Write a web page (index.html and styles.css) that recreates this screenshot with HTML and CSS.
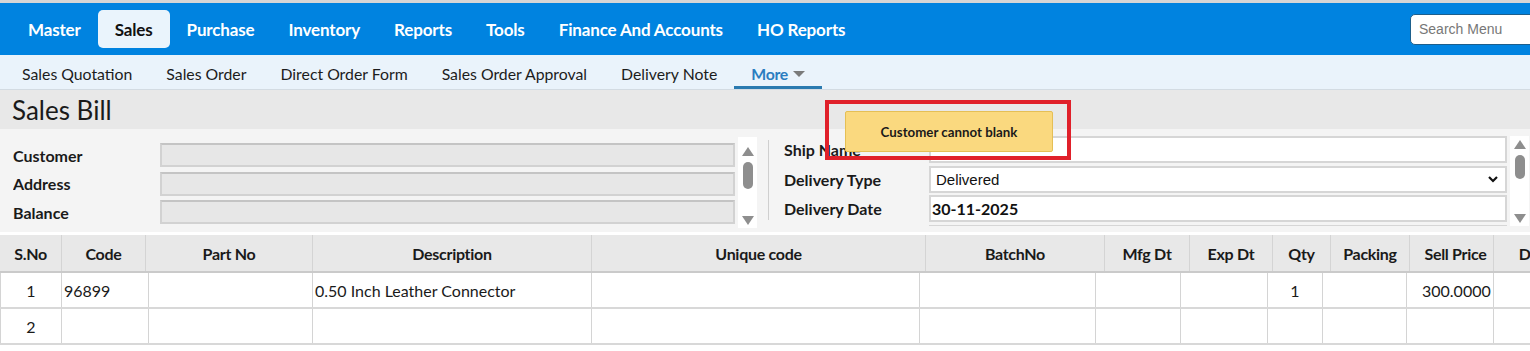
FILE: index.html
```html
<!DOCTYPE html>
<html lang="en">
<head>
    <meta charset="UTF-8">
    <meta name="viewport" content="width=device-width, initial-scale=1.0">
    <title>Sales Bill</title>
    <link rel="stylesheet" href="styles.css">
</head>
<body>
    <div class="topstrip"></div>
    <header class="menubar">
        <nav class="mainnav">
            <a>Master</a>
            <a class="active">Sales</a>
            <a>Purchase</a>
            <a>Inventory</a>
            <a>Reports</a>
            <a>Tools</a>
            <a>Finance And Accounts</a>
            <a>HO Reports</a>
        </nav>
        <input class="search" type="text" placeholder="Search Menu">
    </header>

    <nav class="subnav">
        <a>Sales Quotation</a>
        <a>Sales Order</a>
        <a>Direct Order Form</a>
        <a>Sales Order Approval</a>
        <a>Delivery Note</a>
        <a class="more">More <span class="caret"></span></a>
    </nav>

    <div class="titlebar">
        <h1>Sales Bill</h1>
    </div>

    <section class="form">
        <div class="panel left">
            <div class="fields">
                <div class="row"><label>Customer</label><input class="ro" type="text" disabled></div>
                <div class="row"><label>Address</label><input class="ro" type="text" disabled></div>
                <div class="row"><label>Balance</label><input class="ro" type="text" disabled></div>
                <div class="row"><label></label><input class="ro" type="text" disabled></div>
            </div>
            <div class="scrollbar">
                <span class="up"></span>
                <span class="thumb"></span>
                <span class="down"></span>
            </div>
        </div>
        <div class="divider"></div>
        <div class="panel right">
            <div class="fields">
                <div class="row"><label>Ship Name</label><input class="box" type="text"></div>
                <div class="row"><label>Delivery Type</label>
                    <div class="box select">
                        <span>Delivered</span>
                        <svg width="12" height="8" viewBox="0 0 12 8"><path d="M2 2 L6 6 L10 2" fill="none" stroke="#111" stroke-width="2.2"/></svg>
                    </div>
                </div>
                <div class="row"><label>Delivery Date</label><input class="box date" type="text" value="30-11-2025"></div>
                <div class="row"><label></label><input class="box" type="text"></div>
            </div>
            <div class="scrollbar">
                <span class="up"></span>
                <span class="thumb"></span>
                <span class="down"></span>
            </div>
        </div>
    </section>

    <div class="alert">
        <div class="toast">Customer cannot blank</div>
    </div>

    <div class="grid">
        <div class="grid-head">
            <div>S.No</div>
            <div>Code</div>
            <div>Part No</div>
            <div>Description</div>
            <div>Unique code</div>
            <div>BatchNo</div>
            <div>Mfg Dt</div>
            <div>Exp Dt</div>
            <div>Qty</div>
            <div>Packing</div>
            <div>Sell Price</div>
            <div>Disc</div>
        </div>
        <div class="grid-body">
            <div class="grid-row">
                <div class="c">1</div>
                <div>96899</div>
                <div></div>
                <div>0.50 Inch Leather Connector</div>
                <div></div>
                <div></div>
                <div></div>
                <div></div>
                <div class="c">1</div>
                <div></div>
                <div>300.0000</div>
                <div></div>
            </div>
            <div class="grid-row">
                <div class="c">2</div>
                <div></div>
                <div></div>
                <div></div>
                <div></div>
                <div></div>
                <div></div>
                <div></div>
                <div></div>
                <div></div>
                <div></div>
                <div></div>
            </div>
        </div>
    </div>
</body>
</html>
```

FILE: styles.css
```css
* {
    margin: 0;
    padding: 0;
    box-sizing: border-box;
}
body {
    width: 1530px;
    height: 351px;
    overflow: hidden;
    position: relative;
    background: #fff;
    font-family: Lato, "Open Sans", sans-serif;
    color: #222;
}

.topstrip {
    height: 3px;
    background: #d6d6d6;
}

/* main menu */
.menubar {
    height: 52px;
    background: #0083e0;
    display: flex;
    align-items: center;
}
.mainnav {
    display: flex;
    align-items: center;
    padding-left: 11px;
}
.mainnav a {
    display: block;
    padding: 0 17px;
    height: 38px;
    line-height: 39px;
    font-size: 17px;
    font-weight: 700;
    letter-spacing: -0.15px;
    color: #fff;
    border-radius: 5px;
}
.mainnav a.active {
    background: #eaf4fc;
    color: #111;
}
.search {
    margin-left: auto;
    margin-right: -30px;
    width: 150px;
    height: 31px;
    border: 1px solid #1d5f8c;
    border-radius: 5px;
    padding: 0 8px;
    font-family: "Liberation Sans", Arial, sans-serif;
    font-size: 14px;
    color: #333;
}
.search::placeholder {
    color: #777;
}

/* sub menu */
.subnav {
    height: 35px;
    background: #eaf3fb;
    border-bottom: 1px solid #d3dbe2;
    display: flex;
    padding-left: 5px;
}
.subnav a {
    display: flex;
    align-items: center;
    padding: 3px 17px 0;
    font-size: 15.8px;
    color: #1c1c1c;
}
.subnav a.more {
    color: #2a7dc0;
    font-weight: 700;
    border-bottom: 3px solid #2a7ab0;
    padding-top: 6px;
    letter-spacing: -0.3px;
}
.caret {
    display: inline-block;
    margin-left: 5px;
    width: 0;
    height: 0;
    border-left: 6px solid transparent;
    border-right: 6px solid transparent;
    border-top: 6px solid #7a7a7a;
}

/* title */
.titlebar {
    height: 39px;
    background: #e8e8e8;
    padding-left: 12px;
    display: flex;
    align-items: center;
}
.titlebar h1 {
    font-size: 26px;
    font-weight: 400;
    color: #1a1a1a;
}

/* header form */
.form {
    height: 103px;
    background: #f4f4f4;
    display: flex;
}
.panel {
    display: flex;
}
.panel .fields {
    overflow: hidden;
}
.row {
    display: flex;
    align-items: center;
}
.row label {
    font-size: 16px;
    font-weight: 700;
    color: #1a1a1a;
}

.left {
    width: 757px;
    padding: 8px 0 4px 13px;
}
.left .fields {
    width: 725px;
    padding-top: 6px;
    display: flex;
    flex-direction: column;
    gap: 4.5px;
}
.left label {
    width: 147px;
}
.ro {
    width: 576px;
    height: 24px;
    background: #e7e7e7;
    border: 2px solid #d2d2d2;
    border-top-color: #c4c4c4;
}

.divider {
    width: 1px;
    background: #cfcfcf;
    margin: 11px 1px 12px 11px;
}

.right {
    width: 760px;
    padding: 7px 0 6px 14px;
}
.right .fields {
    width: 723px;
    display: flex;
    flex-direction: column;
    gap: 2.5px;
}
.right label {
    width: 145px;
}
.box {
    width: 578px;
    height: 27px;
    background: #fff;
    border: 2px solid #d6d6d6;
    font-family: "Liberation Sans", Arial, sans-serif;
    font-size: 15px;
    color: #111;
    padding: 0 5px;
}
.select {
    display: flex;
    align-items: center;
    justify-content: space-between;
    padding-right: 6px;
}
.date {
    font-family: Lato, sans-serif;
    font-weight: 700;
    font-size: 16px;
    padding-left: 1px;
}

/* fake scrollbars */
.scrollbar {
    width: 19px;
    background: #fff;
    display: flex;
    flex-direction: column;
    align-items: center;
    padding: 10px 0 3px;
}
.left .scrollbar {
    margin-left: 3px;
}
.right .scrollbar {
    margin-left: 3px;
    padding-top: 4px;
}
.up, .down {
    width: 0;
    height: 0;
    border-left: 6px solid transparent;
    border-right: 6px solid transparent;
}
.up {
    border-bottom: 9px solid #8e8e8e;
}
.down {
    border-top: 9px solid #8e8e8e;
    margin-top: auto;
}
.thumb {
    width: 10px;
    height: 27px;
    border-radius: 5px;
    background: #8e8e8e;
    margin-top: 6px;
}
.right .thumb {
    height: 24px;
}

/* validation message */
.alert {
    position: absolute;
    left: 825px;
    top: 100px;
    width: 246px;
    height: 60px;
    border: 4px solid #e0202a;
    padding: 7px 14px 4px 16px;
}
.toast {
    height: 41px;
    background: #fad97f;
    border: 1px solid #e5bf55;
    border-radius: 2px;
    display: flex;
    align-items: center;
    justify-content: center;
    font-size: 13.3px;
    font-weight: 700;
    color: #1a1a1a;
}

/* item grid */
.grid {
    margin-top: 3px;
    width: 1580px;
}
.grid-head {
    display: grid;
    grid-template-columns: 62px 84px 167px 279px 334px 179px 85px 83px 58px 79px 84px 80px;
    height: 38px;
    background: #e8e8e8;
    border-bottom: 2px solid #cacaca;
}
.grid-head div {
    display: flex;
    align-items: center;
    justify-content: center;
    font-size: 16px;
    font-weight: 700;
    color: #1a1a1a;
    border-right: 1px solid #d4d4d4;
    letter-spacing: -0.3px;
}
.grid-head div:nth-child(11) {
    padding-left: 8px;
}
.grid-row {
    display: grid;
    grid-template-columns: 62px 87px 164px 279px 328px 176px 85px 87px 55px 84px 87px 80px;
    height: 36px;
    border-bottom: 2px solid #d8d8d8;
}
.grid-row div {
    display: flex;
    align-items: center;
    padding-left: 2px;
    padding-top: 1px;
    font-size: 16px;
    color: #1a1a1a;
    border-right: 1px solid #d4d4d4;
}
.grid-row div:first-child {
    border-left: 1px solid #d4d4d4;
}
.grid-row div.c {
    justify-content: center;
    padding-left: 0;
}
.grid-row div:nth-child(11) {
    padding-left: 15px;
}
```
